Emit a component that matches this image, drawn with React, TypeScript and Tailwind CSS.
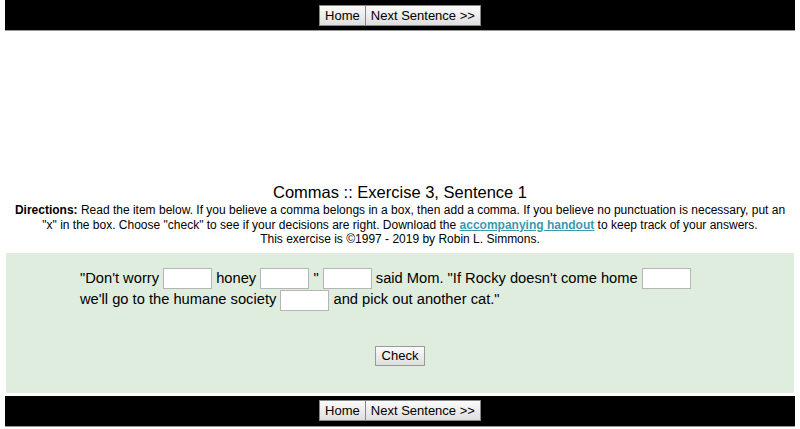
import { useState } from 'react';

function NavBar() {
  return (
    <div className="mx-[5px] flex h-[31px] items-center justify-center border-b border-[#999] bg-black">
      <button className="h-[21px] border border-[#888] bg-gradient-to-b from-[#fbfbfb] to-[#dedede] px-[5px] text-[13px] leading-none text-black">
        Home
      </button>
      <button className="h-[21px] border border-l-0 border-[#888] bg-gradient-to-b from-[#fbfbfb] to-[#dedede] px-[5px] text-[13px] leading-none text-black">
        Next Sentence &gt;&gt;
      </button>
    </div>
  );
}

function Blank({ value, onChange }: { value: string; onChange: (v: string) => void }) {
  return (
    <input
      type="text"
      value={value}
      onChange={(e) => onChange(e.target.value)}
      className="inline-block h-[21px] w-[49px] border border-[#b5b5b5] bg-white align-middle text-[14px]"
    />
  );
}

export default function App() {
  const [answers, setAnswers] = useState<string[]>(['', '', '', '', '']);
  const set = (i: number) => (v: string) => {
    const next = [...answers];
    next[i] = v;
    setAnswers(next);
  };

  return (
    <div className="h-[429px] overflow-hidden bg-white font-['Liberation_Sans',Arial,sans-serif] text-black">
      <NavBar />
      <div className="h-[151px]" />
      <div className="text-center">
        <h1 className="text-[16.5px] leading-[20px]">Commas :: Exercise 3, Sentence 1</h1>
        <p className="mt-[1px] whitespace-nowrap text-[12px] leading-[14.5px]">
          <strong>Directions:</strong> Read the item below. If you believe a comma belongs in a box, then add a comma. If you
          believe no punctuation is necessary, put an
          <br />
          "x" in the box. Choose "check" to see if your decisions are right. Download the{' '}
          <a href="#" className="font-bold text-[#3a9ab0] underline">
            accompanying handout
          </a>{' '}
          to keep track of your answers.
          <br />
          This exercise is ©1997 - 2019 by Robin L. Simmons.
        </p>
      </div>
      <div className="mx-[6px] mt-[6px] h-[140px] bg-[#dfeddf] pt-[15px]">
        <div className="pl-[74px] text-[14.7px] leading-[20px]">
          "Don't worry <Blank value={answers[0]} onChange={set(0)} /> honey{' '}
          <Blank value={answers[1]} onChange={set(1)} /> " <Blank value={answers[2]} onChange={set(2)} /> said Mom. "If
          Rocky doesn't come home <Blank value={answers[3]} onChange={set(3)} />
          <br />
          we'll go to the humane society <Blank value={answers[4]} onChange={set(4)} /> and pick out another cat."
        </div>
        <div className="mt-[35px] flex justify-center">
          <button className="h-[20px] border border-[#999] bg-gradient-to-b from-[#fbfbfb] to-[#dedede] px-[6px] text-[13px] leading-none">
            Check
          </button>
        </div>
      </div>
      <div className="mt-[3px]">
        <NavBar />
      </div>
    </div>
  );
}
